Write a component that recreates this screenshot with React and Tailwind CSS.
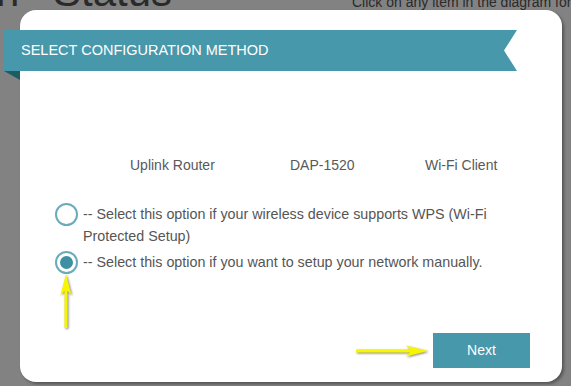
import React, { useState } from 'react';

function Radio({ checked, onClick }) {
  return (
    <button
      type="button"
      onClick={onClick}
      className="w-[23px] h-[23px] shrink-0 rounded-full border-2 border-[#6aabb9] bg-white flex items-center justify-center"
    >
      {checked && <span className="w-[13px] h-[13px] rounded-full bg-[#3f8fa2]" />}
    </button>
  );
}

export default function App() {
  const [method, setMethod] = useState('manual');

  return (
    <div className="relative w-[571px] h-[386px] overflow-hidden bg-[#828282] font-['Liberation_Sans',Arial,sans-serif]">
      {/* page behind the dialog */}
      <div className="absolute left-[-4px] top-[-30px] text-[42px] leading-[44px] text-[#2a2a2a] [word-spacing:22px]">
        n Status
      </div>
      <div className="absolute left-[352px] top-[-5px] text-[14px] leading-[14px] text-[#2a2a2a] whitespace-nowrap">
        Click on any item in the diagram for
      </div>

      {/* dialog */}
      <div className="absolute left-[20px] top-[10px] w-[542px] h-[372px] bg-white rounded-[16px] shadow-[2px_2px_3px_rgba(0,0,0,0.35)] flex flex-col">
        <div className="relative mt-[20px] -ml-[17px] w-[514px] h-[41px]">
          <div className="h-full bg-[#4798aa] flex items-center pl-[18px] [clip-path:polygon(0_0,100%_0,calc(100%-13px)_50%,100%_100%,0_100%)]">
            <span className="text-white text-[14.5px]">SELECT CONFIGURATION METHOD</span>
          </div>
          <svg className="absolute left-0 top-[41px]" width="17" height="9" viewBox="0 0 17 9">
            <polygon points="1,0 17,0 17,9" fill="#1e5c63" />
          </svg>
        </div>

        <div className="mt-[84px] flex text-[14px] leading-[20px] text-[#595959] pl-[110px]">
          <span className="w-[160px]">Uplink Router</span>
          <span className="w-[135px]">DAP-1520</span>
          <span>Wi-Fi Client</span>
        </div>

        <div className="mt-[28px] pl-[35px] pr-[30px] flex flex-col gap-[4px] text-[14.3px] leading-[22px] text-[#555]">
          <label className="flex items-start gap-[5px] cursor-pointer">
            <Radio checked={method === 'wps'} onClick={() => setMethod('wps')} />
            <span>-- Select this option if your wireless device supports WPS (Wi-Fi Protected Setup)</span>
          </label>
          <label className="flex items-start gap-[5px] cursor-pointer">
            <Radio checked={method === 'manual'} onClick={() => setMethod('manual')} />
            <span>-- Select this option if you want to setup your network manually.</span>
          </label>
        </div>

        <div className="mt-[59px] flex justify-end pr-[32px]">
          <button
            type="button"
            className="w-[97px] h-[35px] bg-[#4798aa] text-white text-[14px]"
          >
            Next
          </button>
        </div>
      </div>

      {/* yellow annotation arrows */}
      <svg
        className="absolute left-[58px] top-[273px] drop-shadow-[1px_1px_1px_rgba(60,60,40,0.6)]"
        width="16"
        height="58"
        viewBox="0 0 16 58"
      >
        <polygon points="8,1 13.5,22 9.5,18 9.5,55 6.5,55 6.5,18 2.5,22" fill="#f7f500" />
      </svg>
      <svg
        className="absolute left-[354px] top-[343px] drop-shadow-[1px_1px_1px_rgba(60,60,40,0.6)]"
        width="76"
        height="16"
        viewBox="0 0 76 16"
      >
        <polygon points="74,8 52,13.5 56,9.5 2,9.5 2,6.5 56,6.5 52,2.5" fill="#f7f500" />
      </svg>
    </div>
  );
}
